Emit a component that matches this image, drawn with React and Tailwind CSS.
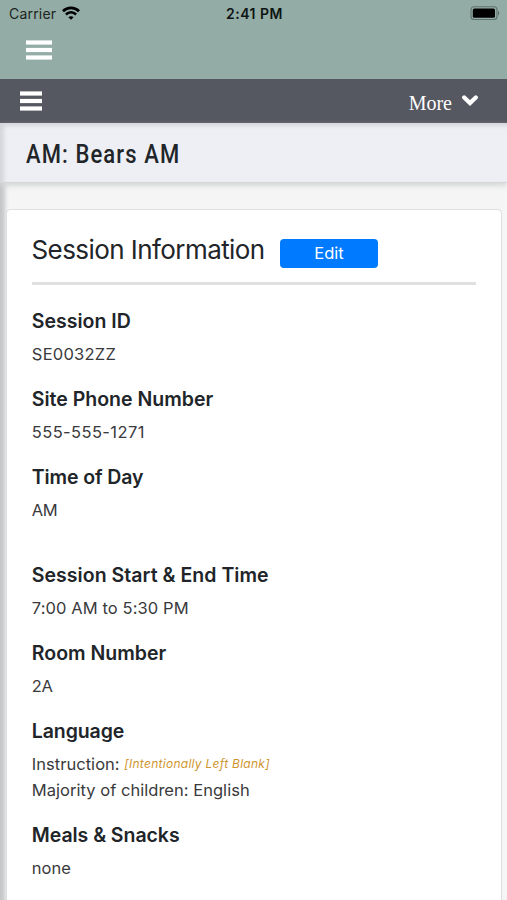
import React from 'react'

const fields = [
  { label: 'Session ID', value: 'SE0032ZZ', valueClass: 'tracking-[0.25px]' },
  { label: 'Site Phone Number', value: '555-555-1271', valueClass: 'tracking-[0.4px]' },
  { label: 'Time of Day', value: 'AM', className: 'mb-[38px]', labelClass: 'tracking-[-0.1px]', valueClass: 'tracking-[-0.4px]' },
  { label: 'Session Start & End Time', value: '7:00 AM to 5:30 PM', labelClass: 'tracking-[0.04px]', valueClass: 'tracking-[0.1px]' },
  { label: 'Room Number', value: '2A', valueClass: 'tracking-[-0.3px]' },
]

function Bars({ className }) {
  return (
    <svg viewBox="0 0 26 20" preserveAspectRatio="none" fill="currentColor" className={className}>
      <rect y=".4" width="26" height="4.2" />
      <rect y="7.9" width="26" height="4.2" />
      <rect y="15.4" width="26" height="4.2" />
    </svg>
  )
}

function WifiIcon() {
  return (
    <svg viewBox="0 0 18 14" className="w-[18px] h-[14px] ml-[6px] mt-[-1px]" fill="none" stroke="black">
      <path d="M1 5.2 C5.4 .8 12.6 .8 17 5.2" strokeWidth="2.7" />
      <path d="M3.9 8.5 C6.8 5.6 11.2 5.6 14.1 8.5" strokeWidth="2.5" />
      <path d="M9 13.8 L6.4 11.2 C7.8 9.8 10.2 9.8 11.6 11.2 Z" fill="black" stroke="none" />
    </svg>
  )
}

function BatteryIcon() {
  return (
    <svg viewBox="0 0 30 14" className="w-[30px] h-[14px] mt-[-1px]">
      <rect x="1" y=".7" width="26" height="12.8" rx="3" fill="none" stroke="#5f716b" strokeWidth="1.1" />
      <rect x="2.8" y="2.4" width="22.2" height="9.4" rx="1.6" fill="black" />
      <path d="M28 4.8 C29.8 5.6 29.8 8.6 28 9.4 Z" fill="#5f716b" />
    </svg>
  )
}

function Field({ label, className = 'mb-[18px]', labelClass = '', valueClass = '', children }) {
  return (
    <div className={className}>
      <h3 className={`mb-[7px] text-[19.5px] leading-[26px] font-semibold text-[#212529] ${labelClass}`}>{label}</h3>
      <div className={`pb-px text-[16.5px] leading-[26px] text-[#3a3a3c] ${valueClass}`}>{children}</div>
    </div>
  )
}

export default function App() {
  return (
    <div className="flex flex-col w-full h-screen overflow-hidden bg-[#f5f5f5] font-['Inter',sans-serif]">
      {/* Status bar and app header */}
      <header className="h-[79px] shrink-0 bg-[#93aca5]">
        <div className="grid grid-cols-3 items-center h-[27px] pl-[9px] pr-[7px] text-[14px] text-[#1b2422]">
          <div className="flex items-center tracking-[0.2px]">
            Carrier
            <WifiIcon />
          </div>
          <div className="text-center font-semibold tracking-[0.5px] text-[#0d1413]">2:41 PM</div>
          <div className="flex justify-end">
            <BatteryIcon />
          </div>
        </div>
        <Bars className="w-[26px] h-[20px] mt-[13px] ml-[26px] text-white" />
      </header>

      {/* Section nav */}
      <nav className="flex items-start justify-between h-[44px] shrink-0 bg-[#555761] text-white pl-[20px] pr-[29px]">
        <Bars className="w-[22px] h-[20px] mt-[12px]" />
        <div className="flex items-start">
          <span className="mt-[12px] text-[20px] leading-[24px] font-['Liberation_Serif',serif]">More</span>
          <svg viewBox="0 0 16 11" className="w-[16px] h-[11px] mt-[16px] ml-[10px]" fill="none" stroke="currentColor" strokeWidth="4.2" strokeLinecap="round">
            <path d="M2.2 2.4 L8 8 L13.8 2.4" />
          </svg>
        </div>
      </nav>

      <main className="flex flex-col flex-1 min-h-0 shadow-[inset_5px_3px_4px_#c4c6c8]">
        <div className="h-[60px] shrink-0 pl-[26px] bg-[#eeeff4] border-b border-[#d5d6d9] shadow-[inset_4px_3px_4px_#d3d6da,0_3px_5px_#d6d8d7]">
          <h1 className="inline-block origin-left scale-x-[0.88] whitespace-nowrap text-[25px] leading-[64px] font-medium tracking-[1.25px] text-[#212529] font-['Roboto',sans-serif]">
            AM: Bears AM
          </h1>
        </div>

        {/* Session card */}
        <section className="flex-1 min-h-0 overflow-hidden mt-[26px] ml-[6px] mr-[5px] pl-[24.5px] pr-[25px] pt-[24px] bg-white border border-b-0 border-[#dfdfdf] rounded-t-[5px]">
          <div className="flex items-start h-[51px] border-b-[3px] border-[#e0e0e0]">
            <h2 className="w-[233.5px] whitespace-nowrap text-[26px] leading-[32px] font-[430] tracking-[-0.57px] text-[#212529]">Session Information</h2>
            <button className="w-[98px] h-[29px] mt-[5px] ml-[15px] rounded-[4px] bg-[#007bff] text-[16.5px] leading-[29px] text-white">
              Edit
            </button>
          </div>

          <div className="pt-[23px] pl-[0.3px]">
            {fields.map((field) => (
              <Field key={field.label} {...field}>
                {field.value}
              </Field>
            ))}
            <Field label="Language" labelClass="tracking-[-0.1px]" valueClass="tracking-[0.03px]">
              <p>
                Instruction:{' '}
                <em className="relative top-[-2px] leading-none text-[12px] tracking-[0.28px] text-[#cf962f]">[Intentionally Left Blank]</em>
              </p>
              <p>Majority of children: English</p>
            </Field>
            <Field label="Meals & Snacks" labelClass="tracking-[-0.05px]">none</Field>
          </div>
        </section>
      </main>
    </div>
  )
}
